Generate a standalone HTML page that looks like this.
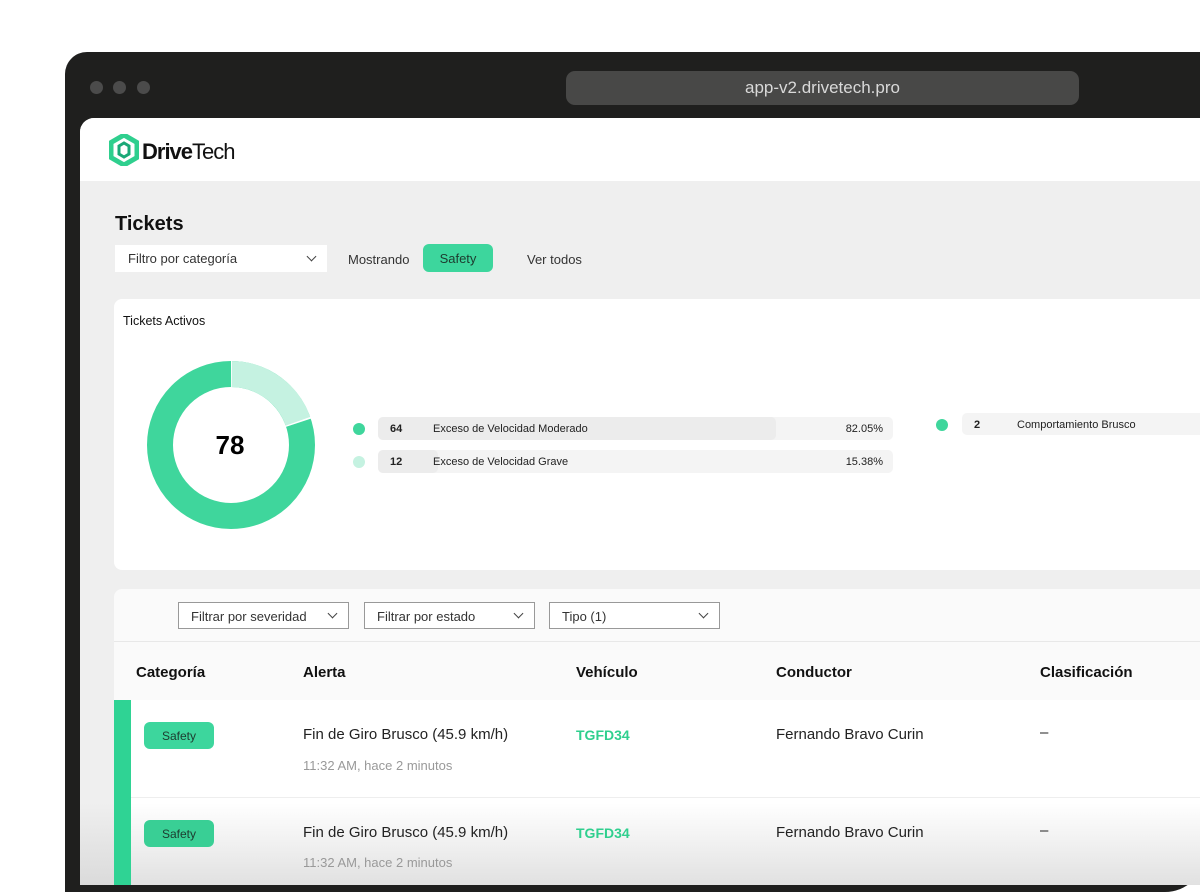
<!DOCTYPE html>
<html><head><meta charset="utf-8"><style>
*{margin:0;padding:0;box-sizing:border-box}
body{width:1200px;height:885px;overflow:hidden;background:#fff;font-family:"Liberation Sans",sans-serif;position:relative;color:#111}
.frame{position:absolute;left:65px;top:52px;width:1140px;height:840px;background:#1f1f1e;border-radius:22px 0 40px 0}
.dot{position:absolute;top:81px;width:13px;height:13px;border-radius:50%;background:#4b4b4b}
.url{position:absolute;left:566px;top:70px;width:513px;height:34px;border-radius:9px;background:#484847;color:#d9d9d9;font-size:17px;text-align:center;line-height:34px}
.app{position:absolute;left:80px;top:118px;width:1120px;height:767px;background:#efefef;border-radius:14px 0 0 0;overflow:hidden}
.hdr{position:absolute;left:0;top:0;width:100%;height:63px;background:#fff}
.abs{position:absolute}
.sel{position:absolute;background:#fff;font-size:13px;color:#333;padding-left:13px;line-height:27px}
.chev{position:absolute;right:12px;top:8px;width:7px;height:7px;border-right:1.3px solid #444;border-bottom:1.3px solid #444;transform:rotate(45deg)}
.card{position:absolute;left:34px;top:181px;width:1100px;height:271px;background:#fff;border-radius:8px}
.bar{position:absolute;height:23px;border-radius:5px;background:#f4f4f4;font-size:11px;line-height:24px;color:#222}
.tbl{position:absolute;left:34px;top:471px;width:1100px;height:300px;background:#fafafa;border-radius:8px 0 0 0}
.th{position:absolute;top:546px;font-size:15px;font-weight:bold;color:#111}
.pill{position:absolute;left:64px;width:70px;height:27px;border-radius:6px;background:#3dd69d;font-size:12px;text-align:center;line-height:29px;color:#1d3b2f}
.t{position:absolute;font-size:15px;color:#222}
.s{position:absolute;font-size:13px;color:#999}
.v{position:absolute;font-size:14px;font-weight:bold;color:#2fcf8e}
</style></head><body>
<div class="frame"></div>
<div class="dot" style="left:90px"></div><div class="dot" style="left:113px"></div><div class="dot" style="left:137px"></div>
<div class="url" style="top:71px">app-v2.drivetech.pro</div>
<div class="app">
 <div class="hdr">
  <svg class="abs" style="left:29px;top:16px" width="30" height="32" viewBox="0 0 30 32"><path d="M15 1 L28 8.5 L28 23.5 L15 31 L2 23.5 L2 8.5Z" fill="none" stroke="#2fcf8e" stroke-width="5" stroke-linejoin="round"/><path d="M10 12 L15 9 L20 12 L20 20 L15 23 L10 20Z" fill="none" stroke="#1aa877" stroke-width="3"/></svg>
  <div class="abs" style="left:62px;top:21px;font-size:22px;letter-spacing:-1px"><b>Drive</b>Tech</div>
 </div>
 <div class="abs" style="left:35px;top:95px;font-size:20px;font-weight:bold">Tickets</div>
 <div class="sel" style="left:35px;top:127px;width:212px;height:27px">Filtro por categoría<div class="chev"></div></div>
 <div class="abs" style="left:268px;top:134px;font-size:13px;color:#333">Mostrando</div>
 <div class="abs" style="left:343px;top:126px;width:70px;height:28px;border-radius:6px;background:#3dd69d;font-size:13px;text-align:center;line-height:30px;color:#1d3b2f">Safety</div>
 <div class="abs" style="left:447px;top:134px;font-size:13px;color:#333">Ver todos</div>
 <div class="card">
  <div class="abs" style="left:9px;top:15px;font-size:12.5px">Tickets Activos</div>
  <svg class="abs" style="left:32px;top:61px" width="170" height="170" viewBox="0 0 170 170">
   <g transform="rotate(-90 85 85)">
   <circle cx="85" cy="85" r="71" fill="none" stroke="#3fd69c" stroke-width="26"/>
   <circle cx="85" cy="85" r="71" fill="none" stroke="#c5f2e1" stroke-width="26" stroke-dasharray="88 500"/>
   <circle cx="85" cy="85" r="71" fill="none" stroke="#fff" stroke-width="28" stroke-dasharray="1.5 86.5 1.5 500" stroke-dashoffset="0.7"/>
   </g>
   <text x="84" y="94" text-anchor="middle" font-size="26" font-weight="bold" font-family="Liberation Sans">78</text>
  </svg>
  <div class="abs" style="left:239px;top:124px;width:12px;height:12px;border-radius:50%;background:#3fd69c"></div>
  <div class="bar" style="left:264px;top:118px;width:515px"><div class="abs" style="left:0;top:0;width:398px;height:23px;background:#ececec;border-radius:5px"></div><b class="abs" style="left:12px">64</b><span class="abs" style="left:55px">Exceso de Velocidad Moderado</span><span class="abs" style="right:10px">82.05%</span></div>
  <div class="abs" style="left:239px;top:157px;width:12px;height:12px;border-radius:50%;background:#c5f2e1"></div>
  <div class="bar" style="left:264px;top:151px;width:515px"><div class="abs" style="left:0;top:0;width:60px;height:23px;background:#ececec;border-radius:5px"></div><b class="abs" style="left:12px">12</b><span class="abs" style="left:55px">Exceso de Velocidad Grave</span><span class="abs" style="right:10px">15.38%</span></div>
  <div class="abs" style="left:822px;top:120px;width:12px;height:12px;border-radius:50%;background:#3fd69c"></div>
  <div class="bar" style="left:848px;top:114px;width:260px;height:22px;line-height:24px"><b class="abs" style="left:12px">2</b><span class="abs" style="left:55px">Comportamiento Brusco</span></div>
 </div>
 <div class="tbl"></div>
 <div class="abs" style="left:34px;top:523px;width:1100px;height:1px;background:#e8e8e8"></div>
 <div class="sel" style="left:98px;top:484px;width:171px;height:27px;border:1px solid #999;background:#fff;padding-left:12px;line-height:27px">Filtrar por severidad<div class="chev" style="top:7px"></div></div>
 <div class="sel" style="left:284px;top:484px;width:171px;height:27px;border:1px solid #999;background:#fff;padding-left:12px;line-height:27px">Filtrar por estado<div class="chev" style="top:7px"></div></div>
 <div class="sel" style="left:469px;top:484px;width:171px;height:27px;border:1px solid #999;background:#fff;padding-left:12px;line-height:27px">Tipo (1)<div class="chev" style="top:7px"></div></div>
 <div class="th" style="left:56px">Categoría</div><div class="th" style="left:223px">Alerta</div><div class="th" style="left:496px">Vehículo</div><div class="th" style="left:696px">Conductor</div><div class="th" style="left:960px">Clasificación</div>
 <div class="abs" style="left:34px;top:582px;width:1100px;height:200px;background:#fff"></div>
 <div class="abs" style="left:34px;top:679px;width:1100px;height:1px;background:#eee"></div>
 <div class="abs" style="left:0;top:685px;width:1120px;height:82px;background:linear-gradient(to bottom,rgba(205,205,205,0),rgba(205,205,205,.6))"></div>
 <div class="abs" style="left:34px;top:582px;width:17px;height:200px;background:#2fd394"></div>
 <div class="pill" style="top:604px">Safety</div>
 <div class="t" style="left:223px;top:608px">Fin de Giro Brusco (45.9 km/h)</div>
 <div class="s" style="left:223px;top:640px">11:32 AM, hace 2 minutos</div>
 <div class="v" style="left:496px;top:609px">TGFD34</div>
 <div class="t" style="left:696px;top:608px">Fernando Bravo Curin</div>
 <div class="t" style="left:960px;top:606px">–</div>
 <div class="pill" style="top:702px;background:#39cf95">Safety</div>
 <div class="t" style="left:223px;top:706px">Fin de Giro Brusco (45.9 km/h)</div>
 <div class="s" style="left:223px;top:737px">11:32 AM, hace 2 minutos</div>
 <div class="v" style="left:496px;top:707px">TGFD34</div>
 <div class="t" style="left:696px;top:706px">Fernando Bravo Curin</div>
 <div class="t" style="left:960px;top:704px">–</div>
</div>
</body></html>
